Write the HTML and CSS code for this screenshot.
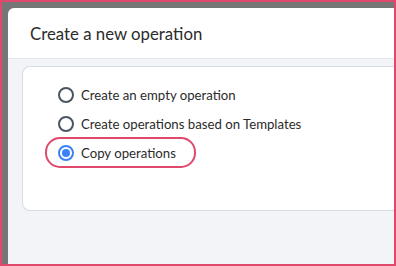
FILE: index.html
```html
<html>
<head>
    <meta charset="UTF-8">
    <link rel="stylesheet" href="styles.css">
</head>

<body>

<div class="frame">
    <div class="dialog">
        <div class="dialog_header">Create a new operation</div>
        <div class="dialog_body">
            <div class="card">
                <div class="options">
                    <label class="option">
                        <span class="radio"></span>
                        <span>Create an empty operation</span>
                    </label>
                    <label class="option">
                        <span class="radio"></span>
                        <span>Create operations based on Templates</span>
                    </label>
                    <label class="option selected">
                        <span class="radio"></span>
                        <span>Copy operations</span>
                    </label>
                </div>
            </div>
        </div>
    </div>
</div>

</body>

</html>
```

FILE: styles.css
```css
body {
    margin: 0;
    font-family: Lato, "Noto Sans", sans-serif;
    color: #2b2b2b;
}

.frame {
    box-sizing: border-box;
    width: 396px;
    height: 266px;
    border: 2px solid #e0486c;
    background: #767676;
    padding: 6px 0 0 6px;
    display: flex;
}

.dialog {
    flex: 1;
    display: flex;
    flex-direction: column;
    background: white;
    border-radius: 6px 0 0 0;
    overflow: hidden;
}

.dialog_header {
    height: 50px;
    padding-left: 22px;
    display: flex;
    align-items: center;
    font-size: 16.8px;
}

.dialog_body {
    flex: 1;
    background: #f3f4f8;
    border-top: 1px solid #e2e5ec;
    padding: 7px 0 0 14px;
}

.card {
    box-sizing: border-box;
    height: 145px;
    background: white;
    border: 1px solid #d6dbe4;
    border-right: none;
    border-radius: 8px 0 0 8px;
    padding: 14px 0 0 24px;
}

.options {
    display: flex;
    flex-direction: column;
    align-items: flex-start;
    gap: 2px;
}

.option {
    height: 27px;
    display: flex;
    align-items: center;
    gap: 7px;
    padding: 0 18px 0 11px;
    font-size: 13.2px;
    border-radius: 13px;
}

.option .radio {
    box-sizing: border-box;
    width: 16px;
    height: 16px;
    border: 2px solid #4a5562;
    border-radius: 50%;
    display: flex;
    align-items: center;
    justify-content: center;
}

.option.selected {
    outline: 2px solid #e0486c;
}

.option.selected .radio {
    border-color: #3b82f6;
}

.option.selected .radio::after {
    content: "";
    width: 8px;
    height: 8px;
    border-radius: 50%;
    background: #3b82f6;
}
```
